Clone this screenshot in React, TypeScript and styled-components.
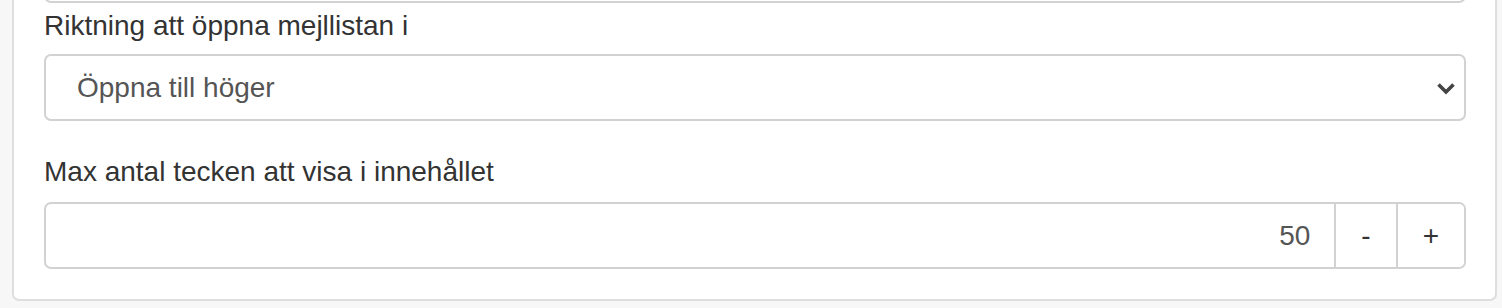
import React, { useState } from 'react';
import styled, { createGlobalStyle } from 'styled-components';

const GlobalStyle = createGlobalStyle`
  html, body {
    margin: 0;
    padding: 0;
    background: #f7f7f7;
    font-family: 'Liberation Sans', Arial, Helvetica, sans-serif;
    color: #333;
    overflow: hidden;
  }
`;

const Page = styled.div`
  padding-left: 12px;
  width: 1485px;
  margin-top: -64px;
`;

const Card = styled.div`
  background: #fff;
  border: 2px solid #dedede;
  border-top: none;
  border-radius: 0 0 7px 7px;
  padding: 0 29px 30px 30px;
  display: flex;
  flex-direction: column;
`;

const Field = styled.div<{ gap?: number }>`
  display: flex;
  flex-direction: column;
  margin-top: ${(props) => (props.gap ? props.gap : 0)}px;
`;

const Label = styled.label<{ spacing?: number }>`
  font-size: 28px;
  line-height: 40px;
  color: #333;
  margin-bottom: ${(props) => (props.spacing ? props.spacing : 10)}px;
`;

const Control = styled.div`
  height: 67px;
  box-sizing: border-box;
  border: 2px solid #d2d2d2;
  border-radius: 7px;
  background: #fff;
`;

const SelectBox = styled.div`
  position: relative;
  height: 67px;
  box-sizing: border-box;
  border: 2px solid #d2d2d2;
  border-radius: 7px;
  background: #fff;
  display: flex;
  align-items: center;
  padding: 0 31px;
  font-size: 28px;
  color: #555;

  svg {
    position: absolute;
    right: 8px;
    top: 26px;
  }
`;

const Group = styled.div`
  display: flex;
  height: 67px;
  box-sizing: border-box;
  border: 2px solid #d2d2d2;
  border-radius: 7px;
  background: #fff;
  overflow: hidden;
`;

const NumberInput = styled.input`
  flex: 1;
  min-width: 0;
  border: none;
  outline: none;
  background: transparent;
  text-align: right;
  padding: 0 24px 0 0;
  font-family: inherit;
  font-size: 28px;
  color: #555;
`;

const StepButton = styled.button`
  border: none;
  border-left: 2px solid #d2d2d2;
  background: #fff;
  padding: 0 25px;
  font-family: inherit;
  font-size: 28px;
  color: #333;
  cursor: pointer;
`;

const App: React.FC = () => {
  const [count, setCount] = useState(50);

  return (
    <>
      <GlobalStyle />
      <Page>
        <Card>
          <Control />
          <Field gap={3}>
            <Label spacing={8}>Riktning att öppna mejllistan i</Label>
            <SelectBox>
              Öppna till höger
              <svg width="20" height="13" viewBox="0 0 20 13">
                <path d="M2.5 2.5 L10 10 L17.5 2.5" fill="none" stroke="#444" strokeWidth="3.6" />
              </svg>
            </SelectBox>
          </Field>
          <Field gap={31}>
            <Label spacing={10}>Max antal tecken att visa i innehållet</Label>
            <Group>
              <NumberInput value={count} onChange={(e) => setCount(Number(e.target.value) || 0)} />
              <StepButton onClick={() => setCount(count - 1)}>-</StepButton>
              <StepButton onClick={() => setCount(count + 1)}>+</StepButton>
            </Group>
          </Field>
        </Card>
      </Page>
    </>
  );
};

export default App;
